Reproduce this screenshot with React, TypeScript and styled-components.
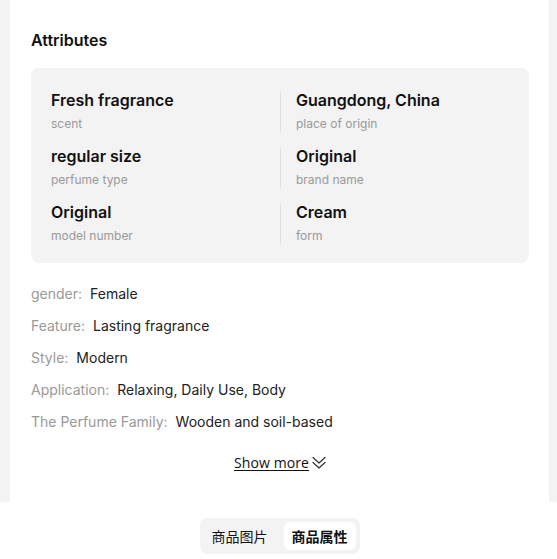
import React from "react";
import styled, { createGlobalStyle } from "styled-components";

const GlobalStyle = createGlobalStyle`
  html, body {
    margin: 0;
    padding: 0;
    background: #ffffff;
    font-family: Inter, "Noto Sans", "Noto Sans CJK SC", sans-serif;
    color: #111111;
  }
  * { box-sizing: border-box; }
`;

const Page = styled.div`
  display: flex;
  flex-direction: column;
  min-height: 559px;
`;

const Backdrop = styled.div`
  background: #f3f3f3;
  padding: 0 8px 0 10px;
`;

const Card = styled.section`
  background: #ffffff;
  padding: 29px 20px 29px 21px;
  display: flex;
  flex-direction: column;
`;

const Title = styled.h2`
  margin: 0 0 17px;
  font-size: 16px;
  line-height: 22px;
  font-weight: 600;
  color: #111111;
`;

const AttrBox = styled.div`
  background: #f3f3f3;
  border-radius: 8px;
  padding: 24px 20px 19px;
  display: grid;
  grid-template-columns: 1fr 1fr;
  row-gap: 16px;
`;

const AttrCell = styled.div<{ $right?: boolean }>`
  display: flex;
  flex-direction: column;
  gap: 8px;
  padding-left: ${(p) => (p.$right ? "15px" : "0")};
  border-left: ${(p) => (p.$right ? "1px solid #e0e0e0" : "none")};
`;

const AttrValue = styled.div`
  font-size: 16px;
  line-height: 16px;
  font-weight: 600;
  color: #111111;
`;

const AttrLabel = styled.div`
  font-size: 12px;
  line-height: 16px;
  color: #9a9a9a;
`;

const PropList = styled.ul`
  list-style: none;
  margin: 21px 0 0;
  padding: 0;
  display: flex;
  flex-direction: column;
  gap: 12px;
`;

const PropRow = styled.li`
  display: flex;
  gap: 8px;
  font-size: 14px;
  line-height: 20px;
`;

const PropKey = styled.span`
  color: #999999;
`;

const PropVal = styled.span`
  color: #222222;
`;

const ShowMore = styled.button`
  align-self: center;
  margin-top: 21px;
  display: inline-flex;
  align-items: center;
  gap: 3px;
  background: none;
  border: none;
  padding: 0;
  font-family: "Open Sans", "Noto Sans", sans-serif;
  font-size: 14px;
  letter-spacing: 0.1px;
  line-height: 20px;
  color: #111111;
  cursor: pointer;
  span {
    text-decoration: underline;
    text-underline-offset: 2px;
  }
  svg {
    color: #333333;
  }
`;

const BottomBar = styled.div`
  background: #ffffff;
  display: flex;
  justify-content: center;
  padding: 16px 8px 6px 10px;
`;

const Tabs = styled.div`
  display: flex;
  gap: 8px;
  padding: 4px;
  background: #f3f3f3;
  border-radius: 8px;
`;

const Tab = styled.button<{ $active?: boolean }>`
  width: 72px;
  height: 28px;
  border: none;
  border-radius: 6px;
  background: ${(p) => (p.$active ? "#ffffff" : "transparent")};
  font-family: "Noto Sans CJK SC", sans-serif;
  font-size: 14px;
  font-weight: ${(p) => (p.$active ? 700 : 400)};
  color: #111111;
  padding: 0;
  cursor: pointer;
`;

const DoubleChevron = () => (
  <svg width="14" height="14" viewBox="0 0 14 14" fill="none" stroke="currentColor" strokeWidth="1.2" strokeLinecap="round" strokeLinejoin="round">
    <path d="M1 1.5 L7 7 L13 1.5" />
    <path d="M1 6.5 L7 12 L13 6.5" />
  </svg>
);

const attrs = [
  { value: "Fresh fragrance", label: "scent" },
  { value: "Guangdong, China", label: "place of origin" },
  { value: "regular size", label: "perfume type" },
  { value: "Original", label: "brand name" },
  { value: "Original", label: "model number" },
  { value: "Cream", label: "form" },
];

const props = [
  { k: "gender:", v: "Female" },
  { k: "Feature:", v: "Lasting fragrance" },
  { k: "Style:", v: "Modern" },
  { k: "Application:", v: "Relaxing, Daily Use, Body" },
  { k: "The Perfume Family:", v: "Wooden and soil-based" },
];

export default function App() {
  return (
    <Page>
      <GlobalStyle />
      <Backdrop>
        <Card>
          <Title>Attributes</Title>
          <AttrBox>
            {attrs.map((a, i) => (
              <AttrCell key={i} $right={i % 2 === 1}>
                <AttrValue>{a.value}</AttrValue>
                <AttrLabel>{a.label}</AttrLabel>
              </AttrCell>
            ))}
          </AttrBox>
          <PropList>
            {props.map((p) => (
              <PropRow key={p.k}>
                <PropKey>{p.k}</PropKey>
                <PropVal>{p.v}</PropVal>
              </PropRow>
            ))}
          </PropList>
          <ShowMore>
            <span>Show more</span>
            <DoubleChevron />
          </ShowMore>
        </Card>
      </Backdrop>
      <BottomBar>
        <Tabs>
          <Tab>商品图片</Tab>
          <Tab $active>商品属性</Tab>
        </Tabs>
      </BottomBar>
    </Page>
  );
}
